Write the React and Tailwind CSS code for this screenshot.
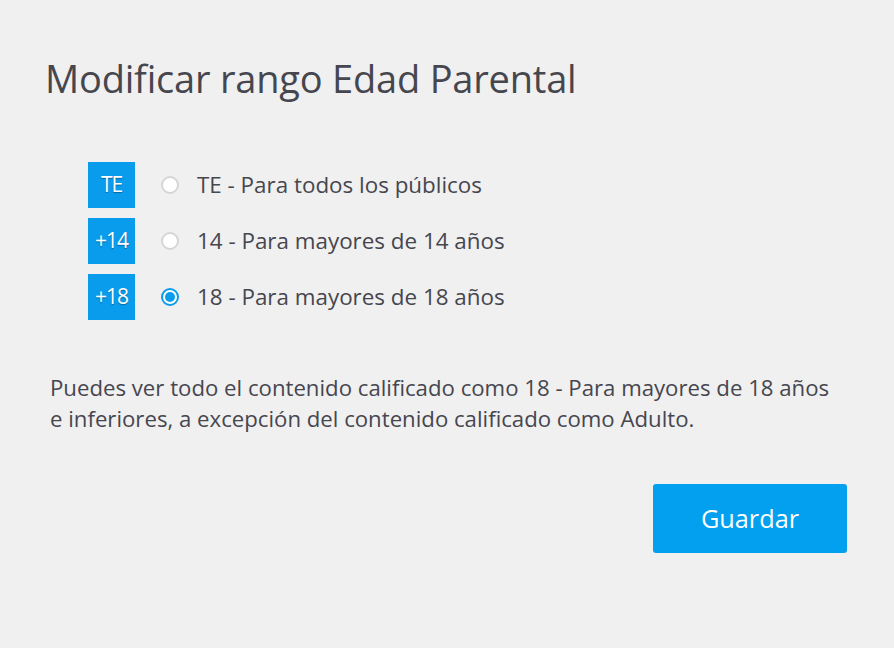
import React, { useState } from "react";

const options = [
  { id: "te", badge: "TE", label: "TE - Para todos los públicos" },
  { id: "14", badge: "+14", label: "14 - Para mayores de 14 años" },
  { id: "18", badge: "+18", label: "18 - Para mayores de 18 años" },
];

export default function App() {
  const [sel, setSel] = useState("18");
  return (
    <div
      className="w-[894px] h-[648px] bg-[#f0f0f0] text-[#45454f] overflow-hidden"
      style={{ fontFamily: "'Open Sans', 'Noto Sans', sans-serif" }}
    >
      <div className="pl-[45px] pt-[54px]">
        <h1 className="text-[38px] leading-[48px] font-normal text-[#46464f] tracking-[-0.2px]">
          Modificar rango Edad Parental
        </h1>
      </div>
      <div className="pl-[88px] pt-[60px] flex flex-col gap-[10px]">
        {options.map((o) => (
          <div key={o.id} className="flex items-center h-[46px]" onClick={() => setSel(o.id)}>
            <div className="w-[47px] h-[46px] bg-[#0a9cec] flex items-center justify-center text-white text-[21px] tracking-[-1px] [text-shadow:0_1px_1px_rgba(0,0,0,0.35)]">
              {o.badge}
            </div>
            <div className="ml-[26px] w-[18px] h-[18px] flex items-center justify-center">
              {sel === o.id ? (
                <div className="w-[18px] h-[18px] rounded-full border-2 border-[#0a9cec] bg-white flex items-center justify-center">
                  <div className="w-[10px] h-[10px] rounded-full bg-[#0a9cec]" />
                </div>
              ) : (
                <div className="w-[18px] h-[18px] rounded-full border-2 border-[#d6d6d6] bg-white" />
              )}
            </div>
            <span className="ml-[18px] text-[22.4px] leading-[30px] text-[#46464f]">{o.label}</span>
          </div>
        ))}
      </div>
      <p className="pl-[50px] pt-[52px] pr-[20px] text-[22.2px] leading-[31px] text-[#46464f] whitespace-nowrap">
        Puedes ver todo el contenido calificado como 18 - Para mayores de 18 años
        <br />
        e inferiores, a excepción del contenido calificado como Adulto.
      </p>
      <div className="flex justify-end pr-[47px] pt-[50px]">
        <button className="w-[194px] h-[69px] bg-[#03a0f0] rounded-[3px] text-white text-[25.3px]">
          Guardar
        </button>
      </div>
    </div>
  );
}
